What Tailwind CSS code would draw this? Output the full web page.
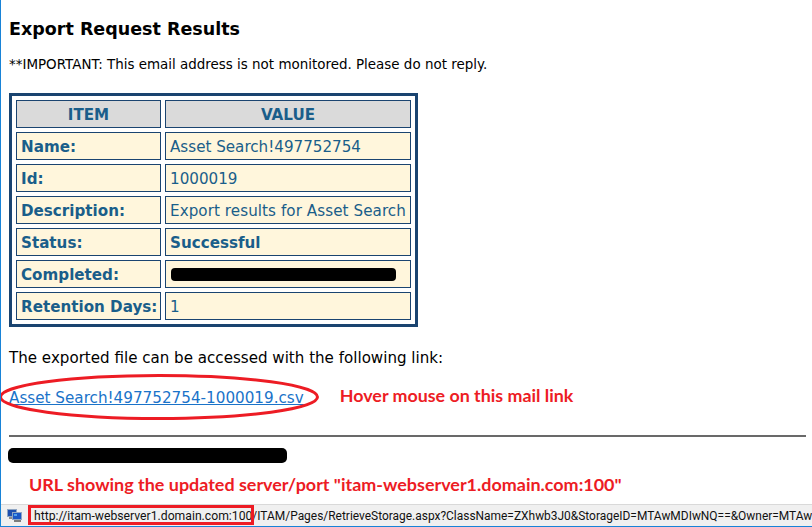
<!DOCTYPE html>
<html><head><meta charset="utf-8"><script src="https://cdn.jsdelivr.net/npm/@tailwindcss/browser@4"></script></head>
<body class="bg-white">
<div class="w-[812px] h-[527px] overflow-hidden relative flex flex-col border-l border-b border-[#1883d7] font-['DejaVu_Sans',sans-serif] text-black">
  <div class="flex-1 pl-[8px] pr-[6px] min-h-0">
    <h1 class="mt-[18px] text-[17.5px] leading-[22px] font-bold">Export Request Results</h1>
    <p class="mt-[17px] text-[13.45px] leading-[16px] whitespace-nowrap">**IMPORTANT: This email address is not monitored. Please do not reply.</p>
    <table class="mt-[20px] w-[409px] table-fixed border-separate border-spacing-[4px] border-[3px] border-[#1a4470] text-[#1a5e8a] text-[15.15px] bg-white">
      <tbody>
        <tr class="h-[28px]"><th class="w-[145px] border border-[#1a4470] bg-[#dadada] text-center font-bold p-0 pt-[2px]">ITEM</th><th class="border border-[#1a4470] bg-[#dadada] text-center font-bold p-0 pt-[2px]">VALUE</th></tr>
        <tr class="h-[28px]"><td class="border border-[#1a4470] bg-[#fff6dc] px-[4px] pt-[2px] pb-0 font-bold">Name:</td><td class="border border-[#1a4470] bg-[#fff6dc] px-[4px] pt-[2px] pb-0">Asset Search!497752754</td></tr>
        <tr class="h-[28px]"><td class="border border-[#1a4470] bg-[#fff6dc] px-[4px] pt-[2px] pb-0 font-bold">Id:</td><td class="border border-[#1a4470] bg-[#fff6dc] px-[4px] pt-[2px] pb-0">1000019</td></tr>
        <tr class="h-[28px]"><td class="border border-[#1a4470] bg-[#fff6dc] px-[4px] pt-[2px] pb-0 font-bold">Description:</td><td class="border border-[#1a4470] bg-[#fff6dc] px-[4px] pt-[2px] pb-0 whitespace-nowrap tracking-[0.07px]">Export results for Asset Search</td></tr>
        <tr class="h-[28px]"><td class="border border-[#1a4470] bg-[#fff6dc] px-[4px] pt-[2px] pb-0 font-bold">Status:</td><td class="border border-[#1a4470] bg-[#fff6dc] px-[4px] pt-[2px] pb-0 font-bold">Successful</td></tr>
        <tr class="h-[28px]"><td class="border border-[#1a4470] bg-[#fff6dc] px-[4px] pt-[2px] pb-0 font-bold">Completed:</td><td class="border border-[#1a4470] bg-[#fff6dc] px-[4px] py-0"><div class="w-[225px] h-[13px] bg-black rounded-[4px] ml-[1px] mt-[1px]"></div></td></tr>
        <tr class="h-[28px]"><td class="border border-[#1a4470] bg-[#fff6dc] px-[4px] pt-[2px] pb-0 font-bold whitespace-nowrap">Retention Days:</td><td class="border border-[#1a4470] bg-[#fff6dc] px-[4px] pt-[2px] pb-0">1</td></tr>
      </tbody>
    </table>
    <p class="mt-[22px] text-[15.1px] leading-[18px] whitespace-nowrap">The exported file can be accessed with the following link:</p>
    <div class="mt-[21px] flex items-center h-[20px]">
      <a class="text-[15.2px] leading-[18px] text-[#1a73c9] underline whitespace-nowrap">Asset Search!497752754-1000019.csv</a>
      <span class="ml-[36px] font-['Lato',sans-serif] font-bold text-[#ed1c24] text-[17.85px] -mt-[6px] whitespace-nowrap">Hover mouse on this mail link</span>
    </div>
    <div class="mt-[27px] h-[2px] bg-[#696969]"></div>
    <div class="mt-[11px] -ml-[1px] w-[279px] h-[15px] bg-black rounded-[5px]"></div>
    <div class="mt-[11px] ml-[20px] font-['Lato',sans-serif] font-bold text-[#ed1c24] text-[17.95px] leading-[20px] whitespace-nowrap">URL showing the updated server/port "itam-webserver1.domain.com:100"</div>
  </div>
  <div class="h-[22px] shrink-0 bg-[#f0f0f0] border-t border-[#d9d9d9] flex items-center overflow-hidden">
    <svg class="ml-[6px] shrink-0" width="15" height="13" viewBox="0 0 15 13"><rect x="0" y="0" width="10" height="8" fill="#8fa6c4"/><rect x="1" y="1" width="8" height="6" fill="#1d4fae"/><rect x="2" y="8" width="5" height="2" fill="#8a8a8a"/><rect x="5" y="3" width="10" height="8" fill="#8fa6c4"/><rect x="6" y="4" width="8" height="6" fill="#1a56c4"/><rect x="7" y="5" width="3" height="2" fill="#4fa0ea"/><rect x="7" y="11" width="7" height="2" fill="#7d7d7d"/></svg>
    <div class="ml-[12px] font-['Roboto',sans-serif] text-[12.2px] leading-[16px] text-[#111] whitespace-nowrap">http://itam-webserver1.domain.com:100<span class="text-[11.95px]">/ITAM/Pages/RetrieveStorage.aspx?ClassName=ZXhwb3J0&amp;StorageID=MTAwMDIwNQ==&amp;Owner=MTAw</span></div>
  </div>
  <svg class="absolute left-[-1px] top-0 pointer-events-none" width="812" height="527" viewBox="0 0 812 527" fill="none">
    <ellipse cx="159" cy="397" rx="158.500" ry="21.500" stroke="#ed1c24" stroke-width="3"/>
    <rect x="29.500" y="506.500" width="223" height="17" stroke="#ed1c24" stroke-width="3"/>
  </svg>
</div>
</body></html>
